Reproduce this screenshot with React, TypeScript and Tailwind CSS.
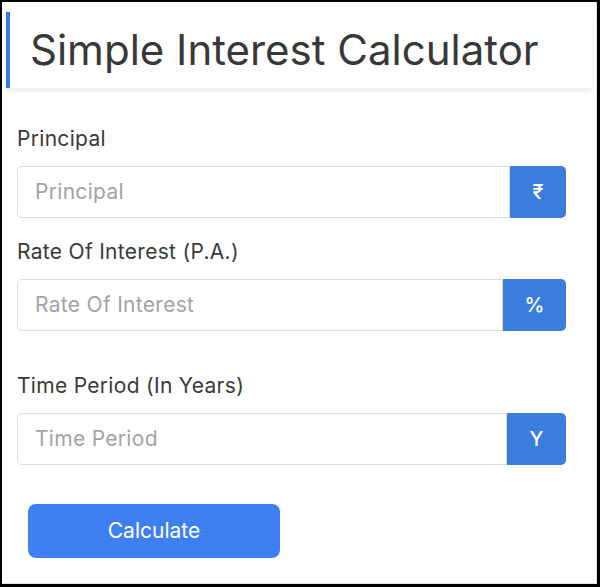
import React from "react";

function Field({ label, placeholder, addon, addonW, mt }: { label: string; placeholder: string; addon: string; addonW: string; mt: string }) {
  return (
    <div className={`${mt} flex flex-col`}>
      <label className="text-[21px] leading-[24px] tracking-[0.3px] text-[#3a3a3a]">{label}</label>
      <div className="mt-[15px] flex h-[52px] w-[549px]">
        <input
          placeholder={placeholder}
          className="min-w-0 flex-1 rounded-l-[5px] border border-[#dcdcdc] bg-white pl-[17px] text-[21px] tracking-[0.3px] text-[#333] outline-none placeholder:text-[#a3a3a3]"
          style={{ fontFamily: "Inter, sans-serif" }}
        />
        <div className={`${addonW} flex items-center justify-center rounded-r-[5px] bg-[#3b7ddd] text-[20px] font-medium text-white`}>
          {addon}
        </div>
      </div>
    </div>
  );
}

export default function App() {
  return (
    <div className="h-[587px] w-[600px] bg-black pl-[2px] pr-[3px] pt-[2px] pb-[3px]" style={{ fontFamily: "Inter, 'Noto Sans', sans-serif" }}>
      <div className="flex h-full flex-col border-r border-b border-[#e6e0e4] bg-white">
        <div className="ml-[4px] mt-[10px] mr-[4px] flex h-[76px] items-center border-l-[4px] border-[#3b7ddd] bg-white pl-[20px] shadow-[0_3px_4px_rgba(0,0,0,0.08)]">
          <h1 className="text-[42px] leading-none text-[#383838]">Simple Interest Calculator</h1>
        </div>
        <div className="flex flex-col pl-[15px]">
          <Field label="Principal" placeholder="Principal" addon="₹" addonW="w-[56px]" mt="mt-[39px]" />
          <Field label="Rate Of Interest (P.A.)" placeholder="Rate Of Interest" addon="%" addonW="w-[63px]" mt="mt-[22px]" />
          <Field label="Time Period (In Years)" placeholder="Time Period" addon="Y" addonW="w-[59px]" mt="mt-[43px]" />
          <button className="ml-[11px] mt-[39px] h-[54px] w-[252px] rounded-[8px] bg-[#3e80f2] text-[21px] text-white">
            Calculate
          </button>
        </div>
      </div>
    </div>
  );
}
